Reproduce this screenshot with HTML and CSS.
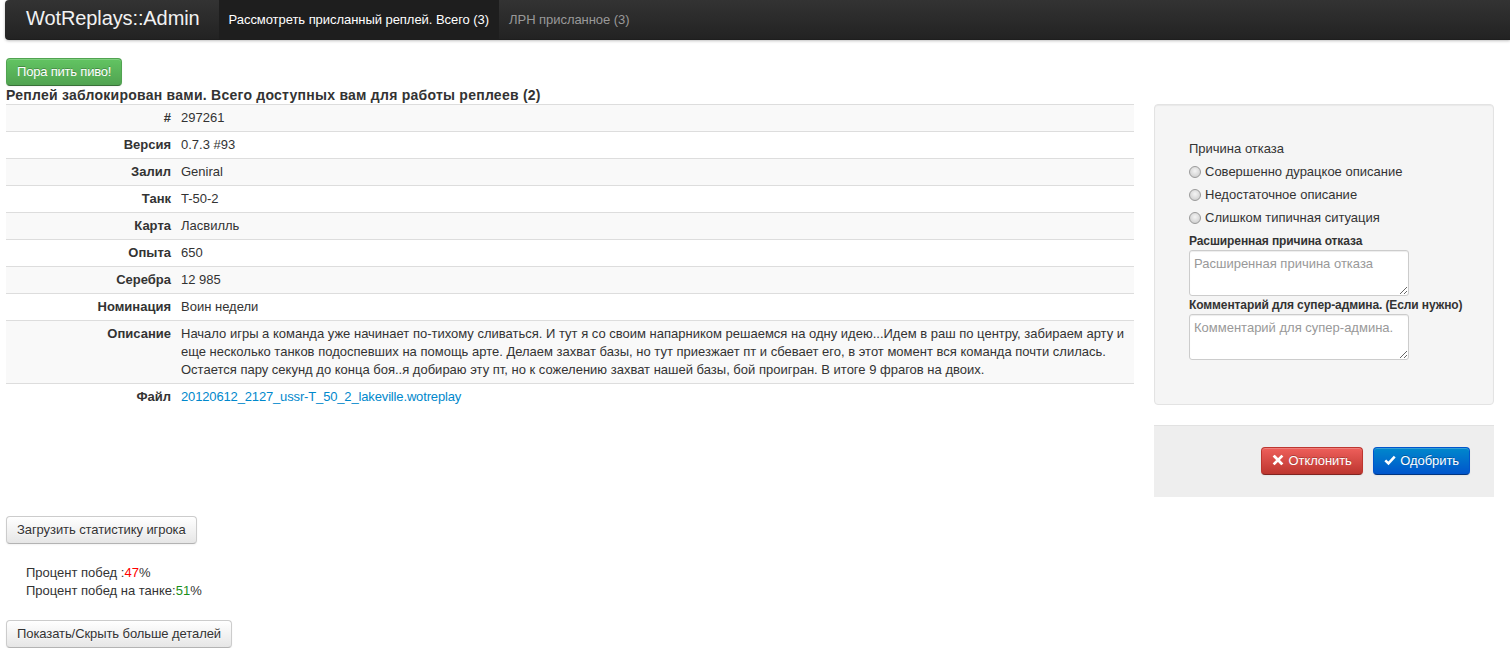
FILE: index.html
```html
<!DOCTYPE html>
<html lang="ru">
<head>
<meta charset="utf-8">
<title>WotReplays::Admin</title>
<link rel="stylesheet" href="styles.css">
</head>
<body>
<div class="navbar">
  <a class="brand" href="#">WotReplays::Admin</a>
  <ul class="nav">
    <li class="active"><a href="#">Рассмотреть присланный реплей. Всего (3)</a></li>
    <li><a href="#">ЛРН присланное (3)</a></li>
  </ul>
</div>

<div class="page">
  <button class="btn btn-success">Пора пить пиво!</button>
  <h4 class="title">Реплей заблокирован вами. Всего доступных вам для работы реплеев (2)</h4>

  <div class="row">
    <div class="main">
      <table class="info">
        <tr><th>#</th><td>297261</td></tr>
        <tr><th>Версия</th><td>0.7.3 #93</td></tr>
        <tr><th>Залил</th><td>Geniral</td></tr>
        <tr><th>Танк</th><td>T-50-2</td></tr>
        <tr><th>Карта</th><td>Ласвилль</td></tr>
        <tr><th>Опыта</th><td>650</td></tr>
        <tr><th>Серебра</th><td>12 985</td></tr>
        <tr><th>Номинация</th><td>Воин недели</td></tr>
        <tr><th>Описание</th><td>Начало игры а команда уже начинает по-тихому сливаться. И тут я со своим напарником решаемся на одну идею...Идем в раш по центру, забираем арту и еще несколько танков подоспевших на помощь арте. Делаем захват базы, но тут приезжает пт и сбевает его, в этот момент вся команда почти слилась. Остается пару секунд до конца боя..я добираю эту пт, но к сожелению захват нашей базы, бой проигран. В итоге 9 фрагов на двоих.</td></tr>
        <tr><th>Файл</th><td><a href="#">20120612_2127_ussr-T_50_2_lakeville.wotreplay</a></td></tr>
      </table>
    </div>

    <div class="side">
      <div class="well">
        <div class="legend">Причина отказа</div>
        <label class="radio"><input type="radio" name="reason"> Совершенно дурацкое описание</label>
        <label class="radio"><input type="radio" name="reason"> Недостаточное описание</label>
        <label class="radio"><input type="radio" name="reason"> Слишком типичная ситуация</label>
        <label class="field-label">Расширенная причина отказа</label>
        <textarea placeholder="Расширенная причина отказа"></textarea>
        <label class="field-label field-label-tight">Комментарий для супер-админа. (Если нужно)</label>
        <textarea placeholder="Комментарий для супер-админа."></textarea>
      </div>
      <div class="form-actions">
        <button class="btn btn-danger"><svg class="ico" viewBox="0 0 14 14"><path d="M3 3 L11 11 M11 3 L3 11" stroke="#fff" stroke-width="3.2" stroke-linecap="square"/></svg> Отклонить</button>
        <button class="btn btn-primary"><svg class="ico" viewBox="0 0 14 14"><path d="M1.5 7.5 L5.2 11 L12.5 3.2" stroke="#fff" stroke-width="3" fill="none" stroke-linejoin="miter"/></svg> Одобрить</button>
      </div>
    </div>
  </div>

  <button class="btn">Загрузить статистику игрока</button>
  <div class="stats">
    <div>Процент побед :<span class="bad">47</span>%</div>
    <div>Процент побед на танке:<span class="good">51</span>%</div>
  </div>
  <button class="btn">Показать/Скрыть больше деталей</button>
</div>
</body>
</html>
```

FILE: styles.css
```css
* { box-sizing: border-box; }

body {
  margin: 0;
  font-family: "Liberation Sans", Arial, sans-serif;
  font-size: 13px;
  line-height: 18px;
  color: #333;
  background: #fff;
}

a { color: #0088cc; text-decoration: none; }

.navbar {
  margin-left: 5px;
  height: 40px;
  display: flex;
  align-items: stretch;
  background: linear-gradient(#333333, #222222);
  border-radius: 4px 0 0 4px;
  box-shadow: 0 1px 3px rgba(0,0,0,.25), inset 0 -1px 0 rgba(0,0,0,.1);
}

.brand {
  display: block;
  padding: 8px 19px 12px 21px;
  font-size: 20px;
  line-height: 20px;
  font-weight: 200;
  letter-spacing: -0.1px;
  color: #f2f2f2;
}

.nav {
  display: flex;
  margin: 0;
  padding: 0;
  list-style: none;
}

.nav li a {
  display: block;
  padding: 11px 10px 11px;
  line-height: 18px;
  letter-spacing: -0.05px;
  color: #999;
}

.nav li.active a {
  color: #fff;
  background: #1e1e1e;
}

.page {
  padding: 18px 16px 0 6px;
}

.btn {
  display: inline-block;
  padding: 4px 10px;
  font-family: inherit;
  font-size: 13px;
  line-height: 18px;
  letter-spacing: -0.08px;
  color: #333;
  text-shadow: 0 1px 1px rgba(255,255,255,.75);
  background: linear-gradient(#ffffff, #e6e6e6);
  border: 1px solid #cccccc;
  border-bottom-color: #b3b3b3;
  border-radius: 4px;
  box-shadow: inset 0 1px 0 rgba(255,255,255,.2), 0 1px 2px rgba(0,0,0,.05);
  cursor: pointer;
  height: 28px;
}

.btn-success {
  color: #fff;
  text-shadow: 0 -1px 0 rgba(0,0,0,.25);
  background: linear-gradient(#62c462, #51a351);
  border-color: #51a351 #51a351 #387038;
  letter-spacing: -0.2px;
}

.btn-danger {
  color: #fff;
  text-shadow: 0 -1px 0 rgba(0,0,0,.25);
  background: linear-gradient(#ee5f5b, #bd362f);
  border-color: #bd362f #bd362f #802420;
}

.btn-primary {
  color: #fff;
  text-shadow: 0 -1px 0 rgba(0,0,0,.25);
  background: linear-gradient(#0088cc, #0055cc);
  border-color: #0055cc #0055cc #003580;
}

.ico {
  width: 12px;
  height: 12px;
  vertical-align: -1px;
  margin-right: 1px;
}

.title {
  margin: 0;
  font-size: 14px;
  line-height: 18px;
  font-weight: bold;
  letter-spacing: 0.25px;
  color: #333;
}

.row {
  display: flex;
  gap: 20px;
  align-items: flex-start;
  margin-bottom: 19px;
}

.main { flex: 1; min-width: 0; }

.info {
  width: 100%;
  border-collapse: collapse;
  border-spacing: 0;
}

.info th, .info td {
  padding: 4px 5px;
  line-height: 18px;
  vertical-align: top;
  border-top: 1px solid #dddddd;
  text-align: left;
}

.info th {
  width: 170px;
  text-align: right;
  font-weight: bold;
}

.info td a { letter-spacing: -0.15px; }

.info tr:nth-child(odd) th,
.info tr:nth-child(odd) td { background: #f9f9f9; }

.side {
  width: 340px;
  flex: none;
}

.well {
  padding: 35px 20px 44px 34px;
  background: #f5f5f5;
  border: 1px solid #e3e3e3;
  border-radius: 4px;
  box-shadow: inset 0 1px 1px rgba(0,0,0,.05);
}

.legend { line-height: 18px; }

.radio {
  display: flex;
  align-items: center;
  margin-top: 5px;
  line-height: 18px;
}

.radio input {
  appearance: none;
  -webkit-appearance: none;
  width: 12px;
  height: 12px;
  margin: 0 4px 0 0;
  border-radius: 50%;
  border: 1px solid #9a9a9a;
  background: radial-gradient(circle at 50% 40%, #f4f4f4 0%, #d9d9d9 60%, #c4c4c4 100%);
}

.field-label {
  display: block;
  margin-top: 5px;
  font-size: 12px;
  font-weight: bold;
  line-height: 18px;
  letter-spacing: -0.1px;
}

.field-label-tight { margin-top: 0; }

.well textarea {
  display: block;
  width: 220px;
  height: 46px;
  padding: 4px;
  font-family: inherit;
  font-size: 13px;
  line-height: 18px;
  color: #555;
  border: 1px solid #cccccc;
  border-radius: 3px;
  background: #fff;
  box-shadow: inset 0 1px 1px rgba(0,0,0,.075);
}

.well textarea::placeholder { color: #999; }

.form-actions {
  margin-top: 20px;
  padding: 21px 24px 22px 20px;
  background: #eeeeee;
  border-top: 1px solid #e2e2e2;
  display: flex;
  justify-content: flex-end;
  gap: 10px;
}

.stats {
  margin: 20px 0 20px;
  padding-left: 20px;
}

.bad { color: #ff0000; }
.good { color: #1a8f1a; }
```
